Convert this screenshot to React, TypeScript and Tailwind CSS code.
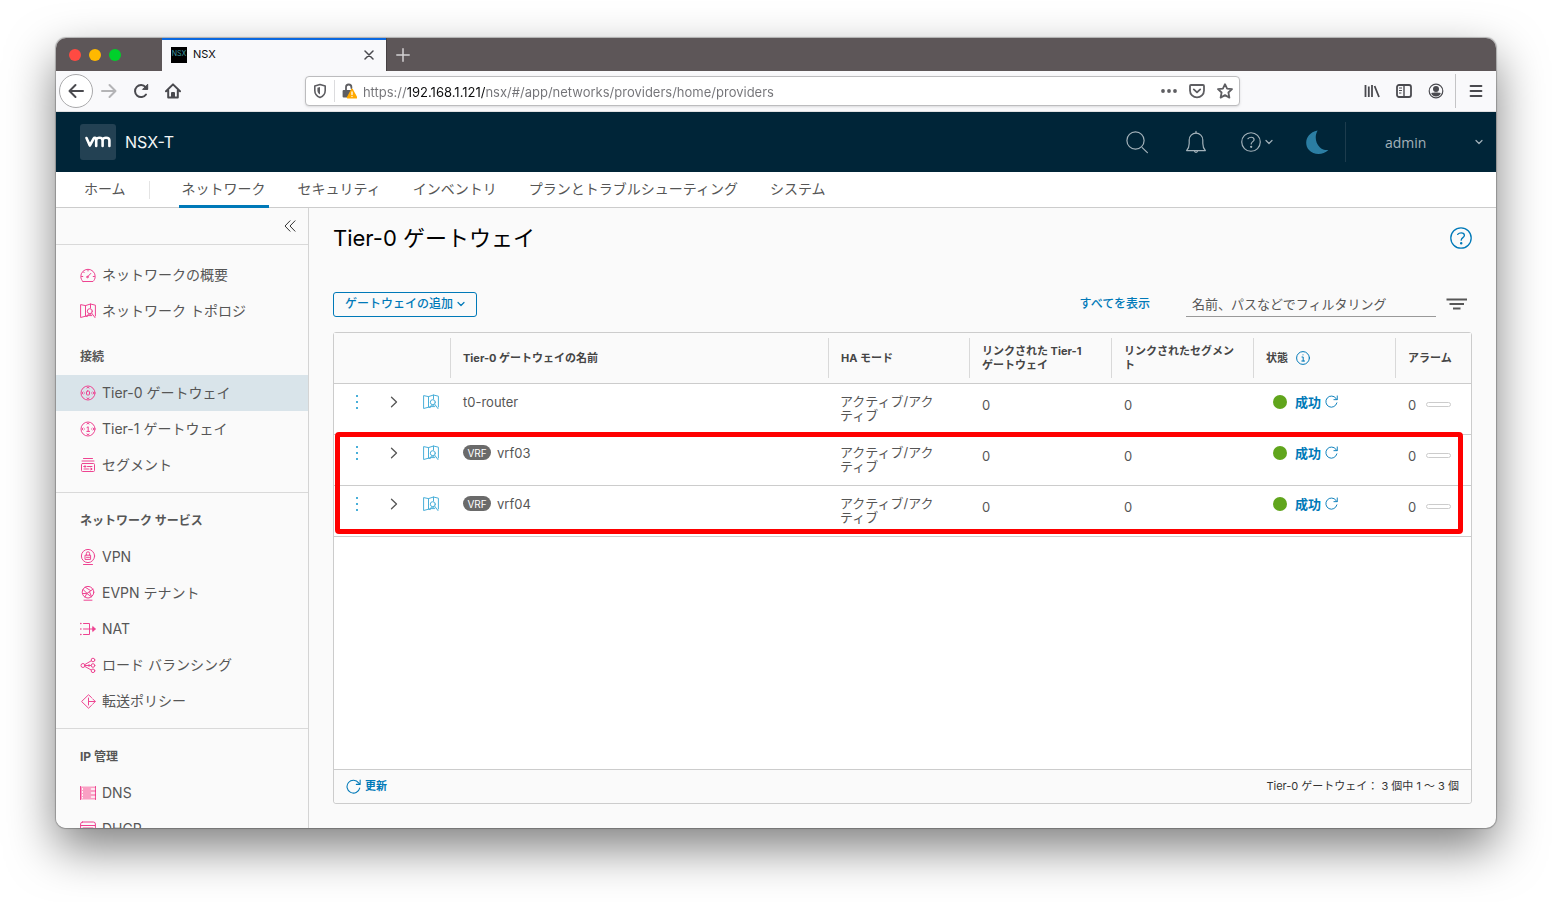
import { useState, type ReactNode } from "react";

interface IconProps {
  size?: number;
  className?: string;
  strokeWidth?: number;
  children: ReactNode;
}

function Icon({ size = 16, className, strokeWidth = 1, children }: IconProps) {
  return (
    <svg
      width={size}
      height={size}
      viewBox={`0 0 ${size} ${size}`}
      fill="none"
      stroke="currentColor"
      strokeWidth={strokeWidth}
      strokeLinecap="round"
      strokeLinejoin="round"
      className={className}
      aria-hidden="true"
    >
      {children}
    </svg>
  );
}

function ChevronDown({ className }: { className?: string }) {
  return (
    <Icon size={8} strokeWidth={1.2} className={className}>
      <path d="M1 2.5L4 5.5L7 2.5" />
    </Icon>
  );
}

function MapIcon({ className }: { className?: string }) {
  return (
    <Icon className={className}>
      <path d="M5.5 13.2L.6 14.5V1.6L5.5 2.6V13.2L7 13.5" />
      <path d="M5.5 2.6L10.5 1L15.4 2.2V13" />
      <path d="M10.5 1V5" />
      <circle cx="9.8" cy="8.2" r="2.5" />
      <path d="M11.7 10.2L15 14.6M7 13.4C7 11.8 8 11.2 9.8 11.2C10.8 11.2 11.4 11.6 11.8 12.6H7" />
    </Icon>
  );
}

function RefreshIcon({ size = 14 }: { size?: number }) {
  return (
    <svg
      width={size}
      height={size}
      viewBox="0 0 14 14"
      fill="none"
      stroke="currentColor"
      strokeLinecap="round"
      strokeLinejoin="round"
      aria-hidden="true"
    >
      <path d="M12.8 8.5A6 6 0 1 1 11.8 3.6L12.9 4.8" />
      <path d="M13.2 1V5H9.6" />
    </svg>
  );
}

function HelpIcon({ size, className }: { size: number; className?: string }) {
  return (
    <svg
      width={size}
      height={size}
      viewBox="0 0 22 22"
      fill="none"
      stroke="currentColor"
      strokeWidth="1.3"
      strokeLinecap="round"
      className={className}
      aria-hidden="true"
    >
      <circle cx="11" cy="11" r="10.2" />
      <path d="M7.7 7.4C8.6 6.3 9.7 5.8 11.2 5.8C13.1 5.8 14.4 6.8 14.4 8.4C14.4 10.5 11.2 10.8 11.2 13.2" />
      <circle cx="11.2" cy="16.3" r=".6" fill="currentColor" />
    </svg>
  );
}

const sideIcons: Record<string, ReactNode> = {
  overview: (
    <>
      <path d="M3 14.5H13C14.4 13.2 15.2 11.4 15.2 9.5A7.2 7.2 0 0 0 .8 9.5C.8 11.4 1.6 13.2 3 14.5Z" />
      <path d="M7.6 9.8L10.8 6.4M8 2.8V4M1.5 9.5H2.8M13.2 9.5H14.5M3.5 5L4.2 5.7" />
      <circle cx="7.4" cy="10" r=".8" />
    </>
  ),
  tier0: (
    <>
      <circle cx="8" cy="8" r="7" />
      <rect x="6.5" y="6" width="3" height="4" rx="1" />
      <path d="M7 3L8 2.2L9 3M7 13L8 13.8L9 13M3 7L2.2 8L3 9M13 7L13.8 8L13 9M4.5 8H4.6M11.5 8H11.6" />
    </>
  ),
  tier1: (
    <>
      <circle cx="8" cy="8" r="7" />
      <path d="M7 6.5L8.2 5.8V10.4M6.8 10.4H9.6M7 3L8 2.2L9 3M7 13L8 13.8L9 13M3 7L2.2 8L3 9M13 7L13.8 8L13 9M4.5 8H4.6M11.5 8H11.6" />
    </>
  ),
  segment: (
    <>
      <rect x="1.5" y="6.5" width="13" height="8" rx="1" />
      <path d="M2 4H14M3.5 1.5H12.5M4 9.5H6M7.5 9.5H12M4 12H8.5M10 12H12M5 8.5L4 9.5L5 10.5M11 11L12 12L11 13" />
    </>
  ),
  vpn: (
    <>
      <circle cx="8" cy="7" r="6.6" />
      <rect x="5.4" y="6.2" width="5.2" height="4.2" />
      <path d="M6.4 6V4.4A1.6 1.6 0 0 1 9.6 4.4V6M6.5 8.3H9.5M3.5 15.5H12.5" />
    </>
  ),
  evpn: (
    <>
      <circle cx="8" cy="7.2" r="5.8" />
      <path d="M3 4.4L7 8.4L13 4.2M2.4 8.6L6.8 8.4L5 12M5.2 2.2L10.6 5.6M9.6 7L11.5 11.4M6.8 8.4L11.4 11.8M4 15.2H12" />
    </>
  ),
  nat: (
    <>
      <path d="M3.5 2.5H9.5V13.5H3.5M3.5 8H15" />
      <path d="M.8 2.5H.9M.8 8H.9M.8 13.5H.9" strokeWidth="1.6" />
      <path d="M13 5.8L15.4 8L13 10.2Z" fill="currentColor" />
    </>
  ),
  lb: (
    <>
      <circle cx="3" cy="8.5" r="2" />
      <circle cx="13" cy="3" r="1.8" />
      <circle cx="13" cy="8.5" r="1.8" />
      <circle cx="13" cy="13.8" r="1.8" />
      <path d="M5 8.5H11M4.8 7.6L11.2 3.8M4.8 9.4L11.2 13M9 7.5V9.5" />
    </>
  ),
  forward: (
    <>
      <path d="M11.5 4.5L8.5 1.8L1.6 8.5L8.5 15.2L11.5 12.4" />
      <path d="M8.5 5V12M8.5 8.5H15M12.6 5.8L15.3 8.5L12.6 11.2" />
    </>
  ),
  dns: (
    <>
      <rect x="1" y="1.5" width="14" height="13" fill="#f9a0c4" stroke="none" />
      <path d="M.5 1.5V14.5M15.5 1.5V14.5" />
      <path d="M2.5 3.5V13" stroke="#fff" strokeDasharray="1 2" />
      <path d="M11.5 4H14.5M11.5 8H14.5M11.5 12H14.5" stroke="#fff" strokeWidth="1.6" />
    </>
  ),
  dhcp: (
    <>
      <rect x=".6" y="1" width="14.8" height="14" rx="2" />
      <path d="M1 4.5H15M3 7H13M12 8.5L10 11" />
    </>
  ),
};

interface SideItem {
  icon: string;
  label: string;
}

const sideGroups: { title: string; items: SideItem[] }[] = [
  {
    title: "接続",
    items: [
      { icon: "tier0", label: "Tier-0 ゲートウェイ" },
      { icon: "tier1", label: "Tier-1 ゲートウェイ" },
      { icon: "segment", label: "セグメント" },
    ],
  },
  {
    title: "ネットワーク サービス",
    items: [
      { icon: "vpn", label: "VPN" },
      { icon: "evpn", label: "EVPN テナント" },
      { icon: "nat", label: "NAT" },
      { icon: "lb", label: "ロード バランシング" },
      { icon: "forward", label: "転送ポリシー" },
    ],
  },
  {
    title: "IP 管理",
    items: [
      { icon: "dns", label: "DNS" },
      { icon: "dhcp", label: "DHCP" },
    ],
  },
];

const navTabs = [
  "ネットワーク",
  "セキュリティ",
  "インベントリ",
  "プランとトラブルシューティング",
  "システム",
];

const gateways = [
  { name: "t0-router", vrf: false },
  { name: "vrf03", vrf: true },
  { name: "vrf04", vrf: true },
];

function BrowserChrome() {
  const [url, setUrl] = useState(
    "https://192.168.1.121/nsx/#/app/networks/providers/home/providers"
  );

  return (
    <div className="shrink-0 font-[Inter,sans-serif]">
      {/* Tab strip */}
      <div className="flex h-[33px] bg-[#5d5658]">
        <div className="flex w-[106px] items-center gap-2 pl-[13px]">
          <span className="size-3 rounded-full bg-[#ff4a42]" />
          <span className="size-3 rounded-full bg-[#ffb900]" />
          <span className="size-3 rounded-full bg-[#00d02b]" />
        </div>
        <div className="flex w-56 items-center border-t-2 border-[#0a68e0] bg-[#f9f9fb] pr-3 pb-0.5 pl-[9px] text-[11px] text-[#0c0c0d]">
          <span className="flex size-4 items-center justify-center bg-black text-[7px] text-[#3f9aa0]">
            NSX
          </span>
          <span className="ml-1.5 flex-1">NSX</span>
          <button type="button" aria-label="タブを閉じる">
            <Icon size={10} strokeWidth={1.5} className="text-[#4a4a4f]">
              <path d="M1 1L9 9M9 1L1 9" />
            </Icon>
          </button>
        </div>
        <button
          type="button"
          aria-label="新しいタブ"
          className="border-l border-[#454042] px-[9px] text-[#d4d2d3]"
        >
          <Icon size={14} strokeWidth={1.5}>
            <path d="M7 .8V13.2M.8 7H13.2" />
          </Icon>
        </button>
      </div>

      {/* Toolbar */}
      <div className="flex h-[41px] items-center border-b border-[#e0e0e1] bg-[#f9f9fb] pl-[3px] text-[#4a4a4f]">
        <button
          type="button"
          aria-label="戻る"
          className="flex size-[34px] items-center justify-center rounded-full border border-[#a9a9ab] bg-white"
        >
          <Icon strokeWidth={2}>
            <path d="M15 8H1.5M7.5 2L1.5 8L7.5 14" />
          </Icon>
        </button>
        <button type="button" aria-label="進む" className="flex w-8 justify-center text-[#b4b4b6]">
          <Icon strokeWidth={2}>
            <path d="M1 8H14.5M8.5 2L14.5 8L8.5 14" />
          </Icon>
        </button>
        <button type="button" aria-label="再読み込み" className="flex w-8 justify-center">
          <Icon strokeWidth={2}>
            <path d="M13 11.5A6 6 0 1 1 12.6 4.2L14 5.6" />
            <path d="M14.7 1.6V6.4H9.9Z" fill="currentColor" strokeWidth={1} />
          </Icon>
        </button>
        <button type="button" aria-label="ホーム" className="flex w-8 justify-center">
          <Icon strokeWidth={2}>
            <path d="M1 8.2L8 1.4L15 8.2M3.2 7.5V14.6H12.8V7.5" />
            <path d="M7 14V10H9V14" />
          </Icon>
        </button>
        <div className="flex-1" />
        <div className="flex h-[30px] flex-[8] items-center rounded-sm border border-[#bcbcbe] bg-white pr-1.5 text-[#5e5e62] shadow-sm">
          <Icon className="ml-1.5" strokeWidth={1.6}>
            <path d="M8 1.6L13.2 3V7.4C13.2 10.8 11 13.2 8 14.4C5 13.2 2.8 10.8 2.8 7.4V3Z" />
            <path d="M8 4V11.6C6.2 10.6 5.4 9.2 5.4 7.2V4.7Z" fill="currentColor" stroke="none" />
          </Icon>
          <span className="ml-1.5 h-[22px] w-px bg-[#dcdcde]" />
          <Icon className="ml-1.5" strokeWidth={1.8}>
            <path d="M5 7.5V4.2A2.7 2.7 0 0 1 10.4 4.2V5" />
            <rect x="1.6" y="7" width="9" height="7.4" rx="1" fill="currentColor" stroke="none" />
            <path d="M11 6.5L15.4 14.6H6.6Z" fill="#ffa900" stroke="#ffa900" />
            <path d="M11 9V11.4M11 13.4V13.5" stroke="#fff" strokeWidth="1.3" />
          </Icon>
          <input
            type="text"
            aria-label="アドレス"
            value={url}
            onChange={(e) => setUrl(e.target.value)}
            className="ml-1.5 h-7 min-w-0 flex-1 bg-[linear-gradient(90deg,#737377_44px,#0c0c0d_44px,#0c0c0d_122px,#737377_122px)] bg-clip-text pt-0.5 text-[13px] text-transparent caret-black outline-none"
          />
          <div className="flex gap-3">
            <button type="button" aria-label="ページ操作">
              <Icon>
                <g fill="currentColor" stroke="none">
                  <circle cx="2" cy="8" r="1.9" />
                  <circle cx="8" cy="8" r="1.9" />
                  <circle cx="14" cy="8" r="1.9" />
                </g>
              </Icon>
            </button>
            <button type="button" aria-label="Pocket に保存">
              <Icon strokeWidth={1.8}>
                <path d="M2 2H14A1 1 0 0 1 15 3V7.4A7 7 0 0 1 1 7.4V3A1 1 0 0 1 2 2Z" />
                <path d="M4.8 6.4L8 9.4L11.2 6.4" />
              </Icon>
            </button>
            <button type="button" aria-label="ブックマーク">
              <Icon strokeWidth={1.8}>
                <path d="M8 1.2L10.1 5.6L15 6.2L11.4 9.5L12.4 14.6L8 12.1L3.6 14.6L4.6 9.5L1 6.2L5.9 5.6Z" />
              </Icon>
            </button>
          </div>
        </div>
        <div className="flex-1" />
        <button type="button" aria-label="ライブラリ" className="flex w-8 justify-center">
          <Icon strokeWidth={1.8}>
            <path d="M1.5 2V14M4.8 3.5V14M8 2V14M10.6 3L15 14" strokeLinecap="butt" />
          </Icon>
        </button>
        <button type="button" aria-label="サイドバー" className="flex w-8 justify-center">
          <Icon strokeWidth={1.8}>
            <rect x="1" y="2" width="14" height="12" rx="2" />
            <path d="M8 2V14" strokeWidth="1.4" />
            <path d="M3.4 5H5.6M3.4 7.5H5.6M3.4 10H5" strokeWidth="1" />
          </Icon>
        </button>
        <button type="button" aria-label="アカウント" className="flex w-8 justify-center">
          <Icon strokeWidth={1.2}>
            <circle cx="8" cy="8" r="6.8" />
            <circle cx="8" cy="6" r="3" fill="currentColor" stroke="none" />
            <path d="M3.2 10.2C5 9.4 11 9.4 12.8 10.2C12 12.6 10 13.4 8 13.4C6 13.4 4 12.6 3.2 10.2Z" fill="currentColor" stroke="none" />
          </Icon>
        </button>
        <span className="ml-[3px] h-[34px] w-px bg-[#c4c4c6]" />
        <button type="button" aria-label="メニュー" className="flex w-10 justify-center">
          <Icon strokeWidth={2}>
            <path d="M2.6 3H13.4M2.6 8H13.4M2.6 13H13.4" />
          </Icon>
        </button>
      </div>
    </div>
  );
}

function AppHeader() {
  return (
    <header className="flex h-[60px] shrink-0 items-center bg-[#002538] pl-6 text-[#a3b2ba]">
      <span className="flex size-9 items-center justify-center rounded-[3px] bg-[#234153]">
        <svg width="26" height="12" viewBox="0 0 26 12" fill="none" stroke="#fff" strokeWidth="2.6" strokeLinecap="round" strokeLinejoin="round" aria-label="vm">
          <path d="M1.5 2L4.8 9.6L8.6 2.6C9.2 1.6 10.8 1.6 11.2 3V10M11.2 4.4C11.2 .9 17.6 .9 17.6 4.4V10M17.6 4.4C17.6 .9 24.4 .9 24.4 4.4V10" />
        </svg>
      </span>
      <span className="ml-[9px] flex-1 text-[16px] text-[#f2f5f6]">NSX-T</span>
      <button type="button" aria-label="検索" className="flex w-[59px] justify-center">
        <Icon size={24} strokeWidth={1.2}>
          <circle cx="10.5" cy="10.5" r="8.6" />
          <path d="M17.2 17.6L22.4 22.6" />
        </Icon>
      </button>
      <button type="button" aria-label="通知" className="flex w-[59px] justify-center">
        <Icon size={24} strokeWidth={1.2}>
          <path d="M2.6 20.6H21.4C19.4 18.4 18.8 16.6 18.8 13.4V10A6.8 6.8 0 0 0 5.2 10V13.4C5.2 16.6 4.6 18.4 2.6 20.6Z" />
          <path d="M12 1.4V3M10.6 21.4C11 22.6 13 22.6 13.4 21.4" />
        </Icon>
      </button>
      <button type="button" aria-label="ヘルプ" className="flex w-[63px] items-center justify-center gap-1">
        <HelpIcon size={20} />
        <ChevronDown />
      </button>
      <button type="button" aria-label="テーマ切り替え" className="flex w-[57px] justify-center">
        <svg width="24" height="24" viewBox="0 0 24 24" fill="#2b7ea3" aria-hidden="true">
          <path d="M12.6.4C9.4 6 10.4 13 15 17.4C17.4 19.6 20.4 20.4 23.4 20C17.6 25.4 8.8 25 4 20C-1.4 14.2.8 2.6 12.6.4Z" />
        </svg>
      </button>
      <button
        type="button"
        className="flex h-10 w-[151px] items-center justify-between border-l border-[#1d3c4d] pr-[13px] pl-[39px] font-['Open_Sans',sans-serif] text-[14px]"
      >
        admin
        <ChevronDown />
      </button>
    </header>
  );
}

function SideLink({ icon, label, active }: SideItem & { active?: boolean }) {
  return (
    <a
      href="#"
      aria-current={active ? "page" : undefined}
      className={`flex h-9 items-center gap-1.5 pb-0.5 pl-6 text-[14px] ${
        active ? "bg-[#d9e4ea]" : ""
      }`}
    >
      {icon === "topology" ? (
        <MapIcon className="mt-0.5 text-[#ee4391]" />
      ) : (
        <Icon className="mt-0.5 text-[#ee4391]">{sideIcons[icon]}</Icon>
      )}
      {label}
    </a>
  );
}

function Sidebar() {
  return (
    <aside className="w-[253px] shrink-0 overflow-hidden border-r border-[#d4d4d4] bg-[#fafafa] text-[#565656]">
      <div className="flex h-[37px] items-center justify-end border-b border-[#d9d9d9] pr-3">
        <button type="button" aria-label="折りたたむ" className="text-[#333]">
          <Icon size={12}>
            <path d="M6 .8L1 6L6 11.2M11 .8L6 6L11 11.2" />
          </Icon>
        </button>
      </div>
      <nav>
        <div className="pt-3">
          <SideLink icon="overview" label="ネットワークの概要" />
          <SideLink icon="topology" label="ネットワーク トポロジ" />
        </div>
        {sideGroups.map((group) => (
          <section
            key={group.title}
            className="border-b border-[#d9d9d9] pt-2.5 pb-[9px] last:border-b-0"
          >
            <h2 className="flex h-9 items-center pl-6 text-[12px] font-bold">
              {group.title}
            </h2>
            {group.items.map((item) => (
              <SideLink key={item.label} {...item} active={item.icon === "tier0"} />
            ))}
          </section>
        ))}
      </nav>
    </aside>
  );
}

function HeaderCell({ className, children }: { className?: string; children: ReactNode }) {
  return (
    <th scope="col" className={`p-0 text-left ${className ?? ""}`}>
      <div className="flex h-10 items-center border-l border-[#d9d9d9] px-3">
        {children}
      </div>
    </th>
  );
}

function GatewayTable() {
  return (
    <div className="relative flex flex-1 flex-col rounded-[3px] border border-[#ccc] bg-white">
      <table className="w-full table-fixed">
        <thead className="bg-[#fafafa] text-[11px] leading-[14px] text-[#454545]">
          <tr className="h-[50px] border-b border-[#ccc]">
            <td className="w-[116px]" />
            <HeaderCell>Tier-0 ゲートウェイの名前</HeaderCell>
            <HeaderCell className="w-[141px]">HA モード</HeaderCell>
            <HeaderCell className="w-[142px]">
              リンクされた Tier-1
              <br />
              ゲートウェイ
            </HeaderCell>
            <HeaderCell className="w-[142px]">リンクされたセグメント</HeaderCell>
            <HeaderCell className="w-[142px]">
              状態
              <Icon size={14} className="ml-2 text-[#0079b8]">
                <circle cx="7" cy="7" r="6.4" />
                <path d="M6 6H7.2V10M5.8 10H8.6M7 3.8V3.9" />
              </Icon>
            </HeaderCell>
            <HeaderCell className="w-[76px]">アラーム</HeaderCell>
          </tr>
        </thead>
        <tbody className="text-[13px] leading-5 text-[#565656]">
          {gateways.map((gw) => (
            <tr key={gw.name} className="h-[51px] border-b border-[#ccc] align-top">
              <td className="pt-2 pl-1">
                <div className="flex h-5 items-center">
                  <button type="button" aria-label="操作" className="flex w-[37px] justify-center text-[#49afd9]">
                    <svg width="4" height="16" viewBox="0 0 4 16" fill="currentColor" aria-hidden="true">
                      <path d="M1 1h2v2H1zM1 7h2v2H1zM1 13h2v2H1z" />
                    </svg>
                  </button>
                  <button type="button" aria-label="展開" className="flex w-[37px] justify-center">
                    <Icon size={12} strokeWidth={1.3}>
                      <path d="M3.5 1.2L8.5 6L3.5 10.8" />
                    </Icon>
                  </button>
                  <button type="button" aria-label="トポロジ" className="flex w-[37px] justify-center text-[#49afd9]">
                    <MapIcon />
                  </button>
                </div>
              </td>
              <td className="pt-2 pl-[13px]">
                <div className="flex h-5 items-center gap-1.5">
                  {gw.vrf && (
                    <span className="flex h-[15px] w-7 items-center justify-center rounded-full bg-[#6a6a6a] text-[10px] text-white">
                      VRF
                    </span>
                  )}
                  {gw.name}
                </div>
              </td>
              <td className="pt-2.5 pr-6 pl-3 leading-[14px]">アクティブ/アクティブ</td>
              <td className="pt-[11px] pl-[13px]">0</td>
              <td className="pt-[11px] pl-[13px]">0</td>
              <td className="pt-2 pl-5">
                <div className="flex h-5 items-center text-[#0079b8]">
                  <span className="size-3.5 rounded-full bg-[#60a51c]" />
                  <a href="#" className="mr-1 ml-2 font-bold">
                    成功
                  </a>
                  <button type="button" aria-label="状態を更新">
                    <RefreshIcon size={13} />
                  </button>
                </div>
              </td>
              <td className="pt-[11px] pl-[13px]">
                <div className="flex items-center gap-2.5">
                  0
                  <span className="h-[5px] w-[25px] rounded-sm border border-[#ccc]" />
                </div>
              </td>
            </tr>
          ))}
        </tbody>
      </table>

      {/* Marks the VRF gateways */}
      <div className="pointer-events-none absolute top-[99px] right-2 left-px h-[102px] rounded-sm border-[5px] border-[#ff0000]" />

      <div className="mt-auto flex h-[34px] items-center justify-between rounded-b-[3px] border-t border-[#ccc] bg-[#fafafa] px-3 text-[11px] text-[#333]">
        <button type="button" className="flex items-center gap-1 font-bold text-[#0079b8]">
          <RefreshIcon size={15} />
          更新
        </button>
        <span>Tier-0 ゲートウェイ： 3 個中 1 ～ 3 個</span>
      </div>
    </div>
  );
}

export default function App() {
  const [activeTab, setActiveTab] = useState(navTabs[0]);
  const [filter, setFilter] = useState("");

  return (
    <div className="h-screen bg-white px-14 pt-[38px] pb-[74px] font-[Inter,'Noto_Sans_CJK_JP',sans-serif]">
      <div className="flex h-full flex-col overflow-hidden rounded-[10px] bg-[#fafafa] shadow-[0_20px_48px_rgba(0,0,0,0.5),0_0_1px_1px_rgba(0,0,0,0.25)]">
        <BrowserChrome />
        <AppHeader />

        {/* Main navigation */}
        <nav className="flex h-9 shrink-0 border-b border-[#ccc] bg-white pl-7 text-[14px] text-[#565656]">
          <a href="#" className="flex items-center pb-0.5">
            ホーム
          </a>
          <span className="mr-[29px] ml-[23px] h-[18px] w-px self-center bg-[#e4e4e4]" />
          <div className="flex gap-[26px]">
            {navTabs.map((tab) => (
              <button
                key={tab}
                type="button"
                onClick={() => setActiveTab(tab)}
                className={`h-9 border-b-[3px] px-[3px] ${
                  tab === activeTab ? "border-b-[#0079b8]" : "border-b-transparent"
                }`}
              >
                {tab}
              </button>
            ))}
          </div>
        </nav>

        <div className="flex min-h-0 flex-1">
          <Sidebar />
          <main className="flex min-w-0 flex-1 flex-col px-6 pt-3 pb-6">
            <div className="flex h-9 items-center justify-between">
              <h1 className="text-[22px] text-black">Tier-0 ゲートウェイ</h1>
              <button type="button" aria-label="ヘルプ" className="text-[#0079b8]">
                <HelpIcon size={22} />
              </button>
            </div>

            {/* Actions */}
            <div className="mt-[35px] mb-[15px] flex h-[26px] items-center">
              <button
                type="button"
                className="flex h-[25px] w-36 items-center justify-center gap-1 rounded-[3px] border border-[#0079b8] text-[12px] font-medium text-[#0079b8]"
              >
                ゲートウェイの追加
                <ChevronDown />
              </button>
              <button type="button" className="mr-9 ml-auto text-[12px] font-medium text-[#0079b8]">
                すべてを表示
              </button>
              <input
                type="text"
                aria-label="フィルタ"
                placeholder="名前、パスなどでフィルタリング"
                value={filter}
                onChange={(e) => setFilter(e.target.value)}
                className="h-[26px] w-[250px] border-b border-[#999] px-1.5 text-[13px] text-[#333] outline-none placeholder:text-[#565656]"
              />
              <button type="button" aria-label="フィルタ条件" className="mr-1 ml-2.5 text-[#565656]">
                <svg width="22" height="12" viewBox="0 0 22 12" fill="none" stroke="currentColor" strokeWidth="2" aria-hidden="true">
                  <path d="M.5 1.5H21M3.5 6H18M7 10.5H14.5" />
                </svg>
              </button>
            </div>

            <GatewayTable />
          </main>
        </div>
      </div>
    </div>
  );
}
